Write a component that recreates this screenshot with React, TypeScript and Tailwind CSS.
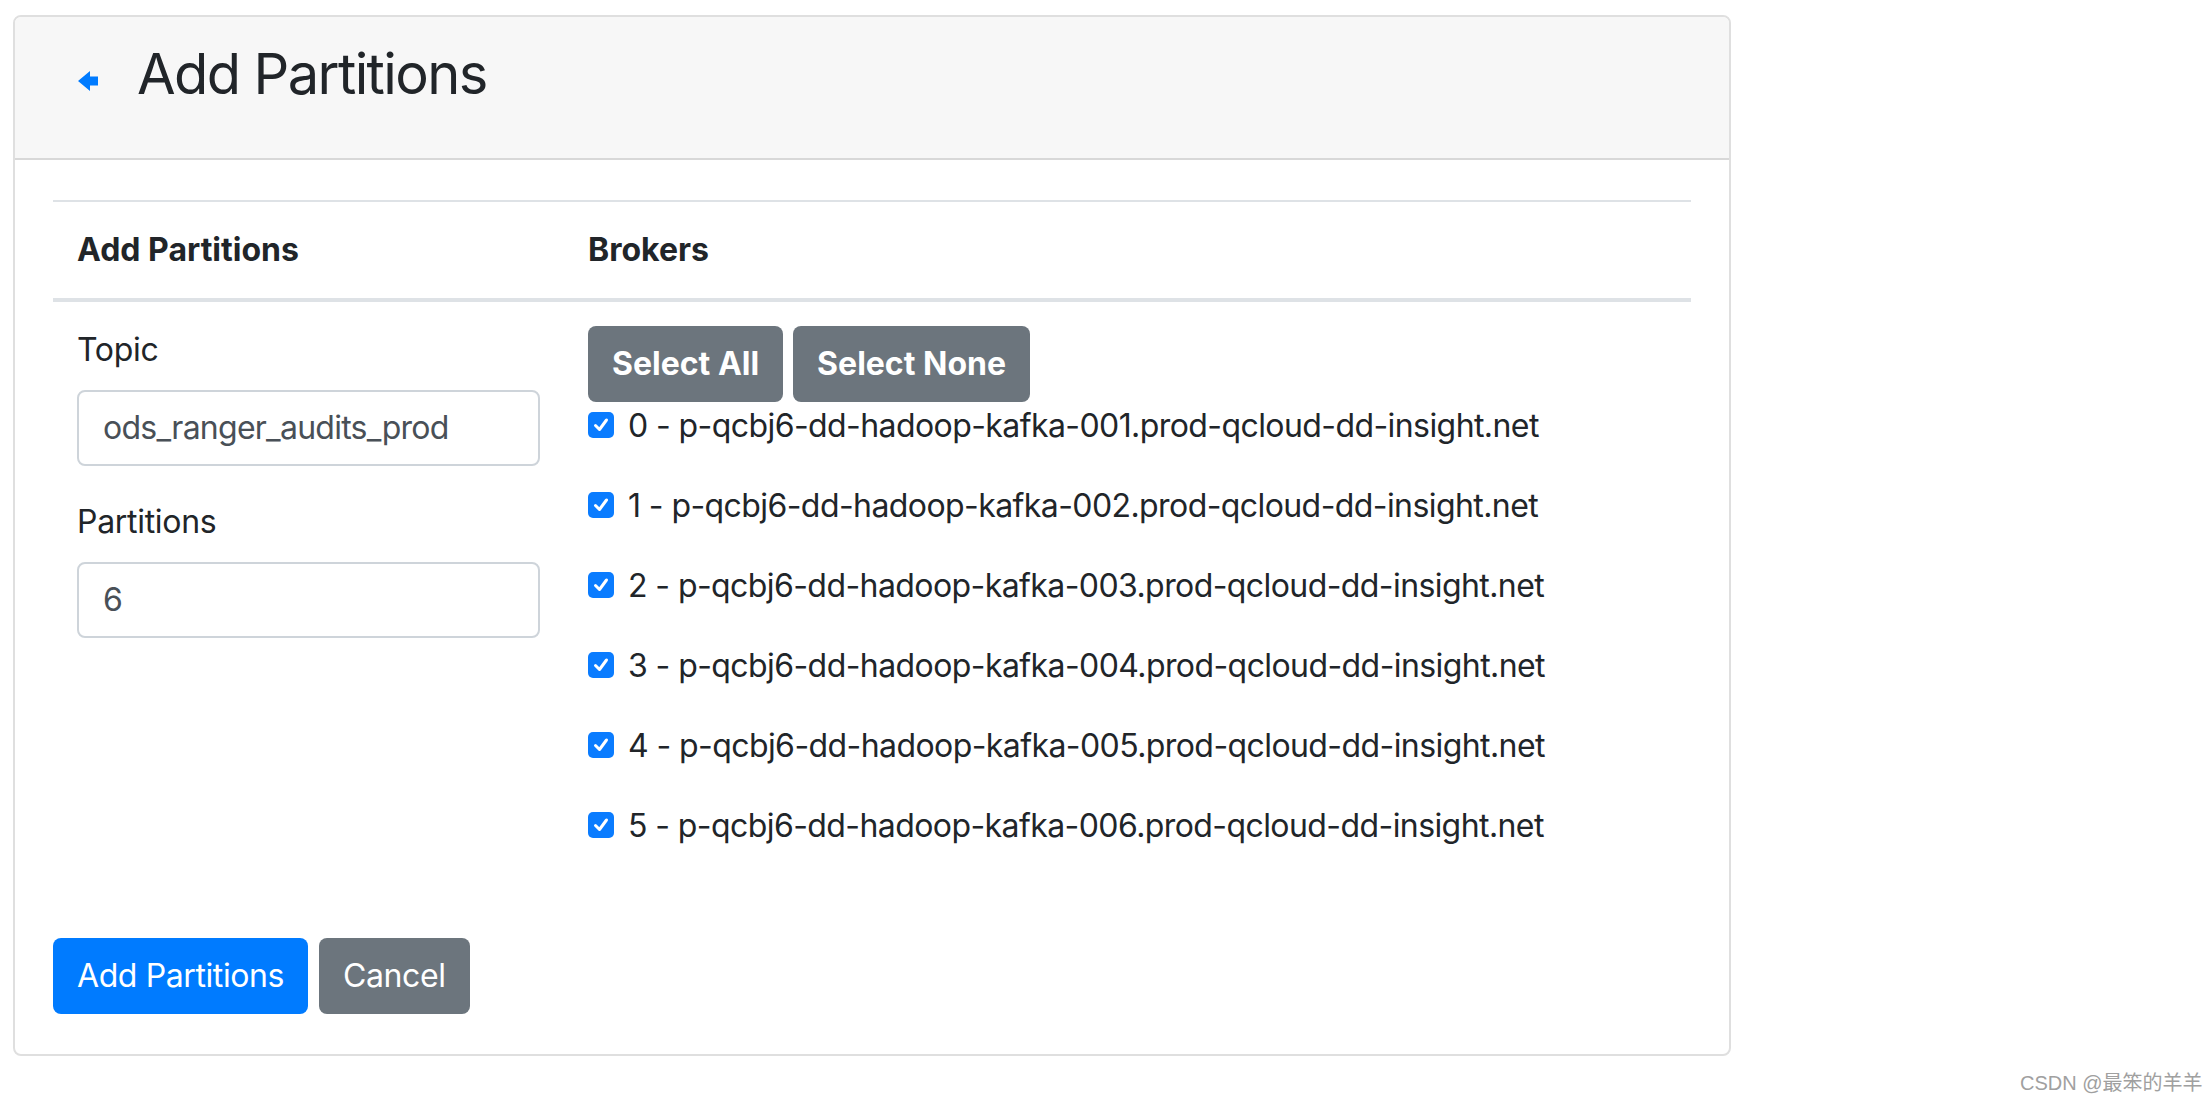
import React from 'react';

// ============================================================
// Add Partitions page (Kafka manager style card)
// ============================================================

const brokers = [
  '0 - p-qcbj6-dd-hadoop-kafka-001.prod-qcloud-dd-insight.net',
  '1 - p-qcbj6-dd-hadoop-kafka-002.prod-qcloud-dd-insight.net',
  '2 - p-qcbj6-dd-hadoop-kafka-003.prod-qcloud-dd-insight.net',
  '3 - p-qcbj6-dd-hadoop-kafka-004.prod-qcloud-dd-insight.net',
  '4 - p-qcbj6-dd-hadoop-kafka-005.prod-qcloud-dd-insight.net',
  '5 - p-qcbj6-dd-hadoop-kafka-006.prod-qcloud-dd-insight.net',
];

const BackArrow = () => (
  <svg width="20" height="20" viewBox="0 0 20 20" className="block">
    <polygon points="0,10 12,0 12,5.5 20,5.5 20,14.5 12,14.5 12,20" fill="#007bff" />
  </svg>
);

const Checkbox = () => (
  <span className="w-[26px] h-[26px] rounded-[5px] bg-[#0a7cff] flex items-center justify-center shrink-0 -mt-[2px]">
    <svg width="18" height="18" viewBox="0 0 18 18">
      <path d="M3.5 9.5 L7.5 13.5 L14.5 4" fill="none" stroke="#fff" strokeWidth="3" strokeLinecap="round" strokeLinejoin="round" />
    </svg>
  </span>
);

export default function App() {
  return (
    <div className="min-h-screen bg-white relative font-['Inter','Liberation_Sans',sans-serif] text-[#212529]">
      <div className="pt-[15px] pl-[13px]">
        <div className="w-[1718px] border-2 border-[#dfdfdf] rounded-[8px] overflow-hidden">
          {/* Header */}
          <div className="h-[143px] bg-[#f7f7f7] border-b-2 border-[#d8d8d8] flex items-start pt-[24px]">
            <a className="ml-[63px] mt-[30px]">
              <BackArrow />
            </a>
            <h3 className="ml-[39px] text-[56px] leading-[67px] font-normal tracking-[-1.6px]">Add Partitions</h3>
          </div>

          {/* Body */}
          <div className="px-[38px] pt-[40px] pb-[40px]">
            {/* Table */}
            <div className="border-t-2 border-[#dee2e6]">
              <div className="flex border-b-4 border-[#dee2e6] text-[32px] leading-[48px] font-bold">
                <div className="w-[511px] p-[24px]">Add Partitions</div>
                <div className="flex-1 p-[24px]">Brokers</div>
              </div>
              <div className="flex text-[32px] leading-[48px]">
                <div className="w-[511px] p-[24px]">
                  <label className="block mb-[16px] tracking-[-0.3px]">Topic</label>
                  <div className="h-[76px] border-2 border-[#ced4da] rounded-[8px] px-[24px] flex items-center text-[#495057] tracking-[-0.75px]">
                    ods_ranger_audits_prod
                  </div>
                  <label className="block mt-[32px] mb-[16px] tracking-[-0.3px]">Partitions</label>
                  <div className="h-[76px] border-2 border-[#ced4da] rounded-[8px] px-[24px] flex items-center text-[#495057]">
                    6
                  </div>
                </div>
                <div className="flex-1 p-[24px]">
                  <div className="flex gap-[10px]">
                    <button className="h-[76px] px-[24px] rounded-[8px] bg-[#6c757d] text-white font-bold">Select All</button>
                    <button className="h-[76px] px-[24px] rounded-[8px] bg-[#6c757d] text-white font-bold">Select None</button>
                  </div>
                  {brokers.map((b) => (
                    <div key={b} className="flex items-center gap-[14px] h-[48px] mb-[32px]">
                      <Checkbox />
                      <span className="tracking-[-0.58px]">{b}</span>
                    </div>
                  ))}
                </div>
              </div>
            </div>

            {/* Actions */}
            <div className="flex gap-[11px] mt-[32px] text-[32px] tracking-[-0.4px]">
              <button className="h-[76px] px-[24px] rounded-[8px] bg-[#007bff] text-white">Add Partitions</button>
              <button className="h-[76px] px-[24px] rounded-[8px] bg-[#6c757d] text-white">Cancel</button>
            </div>
          </div>
        </div>
      </div>

      {/* watermark */}
      <div className="absolute left-[2020px] top-[1070px] text-[20px] leading-[26px] text-[#a0a0a0] font-['Liberation_Sans','Noto_Sans_CJK_SC',sans-serif]">
        CSDN @最笨的羊羊
      </div>
    </div>
  );
}
